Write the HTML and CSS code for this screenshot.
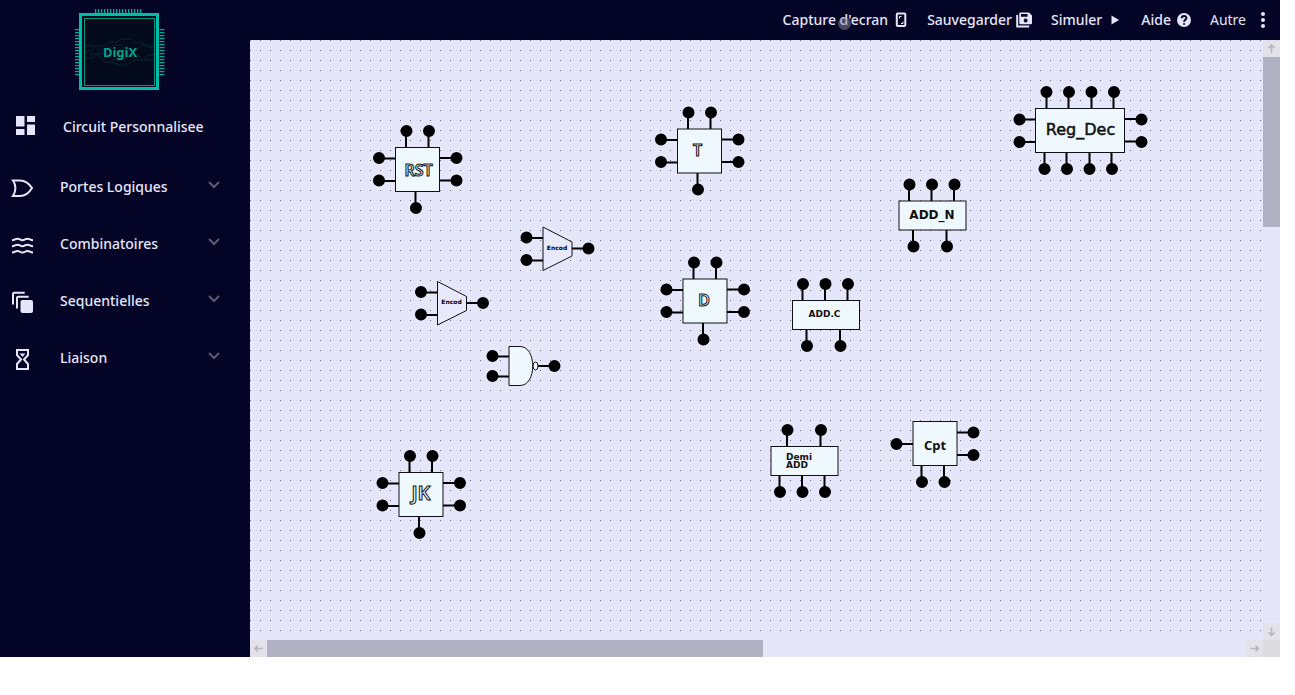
FILE: index.html
```html
<!DOCTYPE html>
<html lang="fr">
<head>
<meta charset="utf-8">
<title>DigiX</title>
<link rel="stylesheet" href="styles.css">
</head>
<body>
<div class="app">
  <aside class="sidebar">
    <svg class="logo" width="96" height="84" viewBox="0 0 96 84" role="img" aria-label="DigiX">
      <path class="logo-pins" stroke-width="4" stroke-dasharray="1.3 1.7" d="M23 3H71"/>
      <path class="logo-pins" stroke-width="5" stroke-dasharray="1.3 1.7" d="M5.500 21V68M90 21V68"/>
      <rect class="logo-frame" x="8.500" y="6.500" width="77" height="74"/>
      <rect class="logo-line" x="12.500" y="10.500" width="70" height="67"/>
      <g class="logo-waves">
        <path d="M13 43h7l4-5h8l5-4h8l4-3h9l5 4h8l4 4h7"/>
        <path d="M13 38h9l5 4h9l5-5h9l6 5h9l5-5h12"/>
        <path d="M13 50h8l5-5h9l6 7h10l6-5h9l5 5h11"/>
        <path d="M18 46h9l5 8h9l5 3h10l5-5h10l4-5h7"/>
      </g>
      <text class="logo-text" x="48" y="49">DigiX</text>
    </svg>
    <nav class="menu">
      <button class="menu-item menu-item-first" type="button">
        <svg class="menu-icon" viewBox="0 0 22 22"><path fill="currentColor" d="M4 0h8.500v10.500H4zM4 13h8.500v6H4zM15 0h8v6h-8zM15 8.500h8V19h-8z"/></svg>
        <span>Circuit Personnalisee</span>
      </button>
      <button class="menu-item" type="button">
        <svg class="menu-icon" viewBox="0 0 22 22"><path class="line" d="M1 4.500h7c5 0 9 3 12 7.500-3 5-7 8-12 8H1c3-5 3-11 0-15.500z"/></svg>
        <span>Portes Logiques</span>
        <svg class="chevron" viewBox="0 0 12 8"><path d="M1 1l5 5 5-5"/></svg>
      </button>
      <button class="menu-item" type="button">
        <svg class="menu-icon" viewBox="0 0 22 22"><path class="line" d="M0 7.200c3 0 3-1.500 5.500-1.500s2.500 1.500 5 1.500 2.500-1.500 5-1.500 2.500 1.500 5.500 1.500M0 13.200c3 0 3-1.500 5.500-1.500s2.500 1.500 5 1.500 2.500-1.500 5-1.500 2.500 1.500 5.500 1.500M0 19.500c3 0 3-1.500 5.500-1.500s2.500 1.500 5 1.500 2.500-1.500 5-1.500 2.500 1.500 5.500 1.500"/></svg>
        <span>Combinatoires</span>
        <svg class="chevron" viewBox="0 0 12 8"><path d="M1 1l5 5 5-5"/></svg>
      </button>
      <button class="menu-item" type="button">
        <svg class="menu-icon" viewBox="0 0 22 22"><path class="line" d="M1 14.500V4q0-1.200 1.200-1.200h10.500M5 18.500V8q0-1.200 1.200-1.200h10.500"/><rect x="8.500" y="10" width="12.500" height="13" rx="2" fill="currentColor"/></svg>
        <span>Sequentielles</span>
        <svg class="chevron" viewBox="0 0 12 8"><path d="M1 1l5 5 5-5"/></svg>
      </button>
      <button class="menu-item" type="button">
        <svg class="menu-icon" viewBox="0 0 22 22"><path class="line" d="M5 3h11v5l-4 4.500 4 4.500v5H5v-5l4-4.500L5 8z"/><path fill="currentColor" d="M7.500 6.500h6l-3 3.500z"/></svg>
        <span>Liaison</span>
        <svg class="chevron" viewBox="0 0 12 8"><path d="M1 1l5 5 5-5"/></svg>
      </button>
    </nav>
  </aside>

  <header class="toolbar">
    <button class="tool" type="button">
      <span>Capture d'ecran</span>
      <svg class="tool-icon" viewBox="0 0 20 20"><rect class="line" x="5.800" y="3.500" width="8.500" height="12.500" rx="1"/><path class="thin" d="M8.500 8.500v-2h2M12 11.500v2h-2"/></svg>
      <i class="pointer"></i>
    </button>
    <button class="tool" type="button">
      <span>Sauvegarder</span>
      <svg class="tool-icon" viewBox="0 0 20 20"><path class="line" d="M2.200 5v11.500h12"/><path fill="currentColor" fill-rule="evenodd" d="M5.500 2.500h8.500l3 3V13q0 1.200-1.200 1.200H5.500Q4.300 14.200 4.300 13V3.700q0-1.200 1.200-1.200zM6 4v2.800h6.500V4zM10.600 8.600a2 2 0 1 0 .1 0z"/></svg>
    </button>
    <button class="tool" type="button">
      <span>Simuler</span>
      <svg class="tool-icon" viewBox="0 0 20 20"><path fill="currentColor" d="M6.500 5.500l7.500 4.500-7.500 4.500z"/></svg>
    </button>
    <button class="tool" type="button">
      <span>Aide</span>
      <svg class="tool-icon" viewBox="0 0 20 20"><circle cx="10" cy="10" r="7" fill="currentColor"/><path class="question" d="M7.700 8.300c0-3 4.700-3 4.700-.3 0 1.800-2.300 1.800-2.300 3.800M10.100 13.300v1.500"/></svg>
    </button>
    <button class="tool tool-light" type="button">
      <span>Autre</span>
      <svg class="tool-icon" viewBox="0 0 20 20"><g fill="currentColor"><circle cx="10" cy="4" r="2"/><circle cx="10" cy="10" r="2"/><circle cx="10" cy="16" r="2"/></g></svg>
    </button>
  </header>

  <main class="workspace">
    <div class="canvas">
      <svg class="circuit">
        <defs>
          <g id="flipflop">
            <path class="wire" d="M10.500 -16V0M33 -16V0M-17 11H0M-17 33.500H0M44 10.500H60M44 33H60M20 44V60"/>
            <rect class="body" width="44" height="44"/>
            <path class="pin" d="M11 -16.500h0M33.500 -16.500h0M-16.500 10.500h0M-16.500 33h0M61 10.500h0M61 33h0M20.500 60.500h0"/>
          </g>
          <g id="mux">
            <path class="wire" d="M-16 11.500H0M-16 34H0M29 22H45"/>
            <path class="shape" d="M0 .5L29 15.500V29.500L0 44z"/>
            <path class="pin" d="M-16.500 11h0M-16.500 33.500h0M45.500 22h0"/>
          </g>
          <g id="adder">
            <path class="wire" d="M10 -16V0M32.500 -16V0M55 -16V0M14 29V45M47.500 29V45"/>
            <rect class="body" width="67" height="29"/>
            <path class="pin" d="M10.500 -16.500h0M33 -16.500h0M55.500 -16.500h0M14.500 45.500h0M48 45.500h0"/>
          </g>
        </defs>
        <g transform="translate(145.500 107.500)"><use href="#flipflop"/><text class="label outlined" x="23" y="28">RST</text></g>
        <g transform="translate(427.500 89)"><use href="#flipflop"/><text class="label outlined" x="20" y="27">T</text></g>
        <g transform="translate(433 239)"><use href="#flipflop"/><text class="label outlined" x="21" y="27">D</text></g>
        <g transform="translate(149 432.500)"><use href="#flipflop"/><text class="label outlined large" x="22" y="27">JK</text></g>
        <g transform="translate(293 186.500)"><use href="#mux"/><text class="label tiny" x="14" y="23">Encod</text></g>
        <g transform="translate(187.500 241)"><use href="#mux"/><text class="label tiny" x="14" y="23">Encod</text></g>
        <g transform="translate(649 161)"><use href="#adder"/><text class="label wide" x="33" y="18">ADD_N</text></g>
        <g transform="translate(542.500 260.500)"><use href="#adder"/><text class="label small" x="32" y="16">ADD.C</text></g>
        <g transform="translate(521 406.500)">
          <path class="wire" d="M16 -16V0M49.500 -16V0M8.500 29V45M31 29V45M53.500 29V45"/>
          <rect class="body" width="67" height="29"/>
          <path class="pin" d="M16.500 -16.500h0M50 -16.500h0M9 45.500h0M31.500 45.500h0M54 45.500h0"/>
          <text class="label small start" x="15" y="13">Demi<tspan x="15" dy="8">ADD</tspan></text>
        </g>
        <g transform="translate(663 381.500)">
          <path class="wire" d="M-16 22.500H0M44 11H60M44 33.500H60M8.500 44V60M31 44V60"/>
          <rect class="body" width="44" height="44"/>
          <path class="pin" d="M-16.500 22.500h0M60.500 11h0M60.500 33.500h0M9 60.500h0M31.500 60.500h0"/>
          <text class="label counter" x="22" y="28">Cpt</text>
        </g>
        <g transform="translate(785.500 68.500)">
          <path class="wire" d="M11 -16V0M33 -16V0M56 -16V0M78 -16V0M9 44V60M31 44V60M54 44V60M76 44V60M-16 11H0M-16 33.500H0M89 10.500H105M89 33H105"/>
          <rect class="body" width="89" height="44"/>
          <path class="pin" d="M11 -16.500h0M33.500 -16.500h0M56 -16.500h0M78.500 -16.500h0M9 60.500h0M31.500 60.500h0M54 60.500h0M76.500 60.500h0M-16 11h0M-16 33.500h0M106 11h0M106 33.500h0"/>
          <text class="label register" x="45" y="26">Reg_Dec</text>
        </g>
        <g transform="translate(259 306.500)">
          <path class="wire" d="M-17 10H0M-17 30H0M28 19.500H45"/>
          <path class="body" d="M0 0H11C28 0 28 39 11 39H0z"/>
          <ellipse class="body" cx="26.500" cy="19.500" rx="2.500" ry="4"/>
          <path class="pin" d="M-16.500 9.500h0M-16.500 29.500h0M45.500 19.500h0"/>
        </g>
      </svg>
    </div>
    <div class="scroll scroll-vertical">
      <button class="arrow" type="button" aria-label="Haut"><svg viewBox="0 0 17 17"><path d="M8.500 13V5M5.500 8l3-3 3 3"/></svg></button>
      <div class="track"><div class="thumb"></div></div>
      <button class="arrow" type="button" aria-label="Bas"><svg viewBox="0 0 17 17"><path d="M8.500 4.500v8M5.500 9.500l3 3 3-3"/></svg></button>
    </div>
    <div class="scroll scroll-horizontal">
      <button class="arrow" type="button" aria-label="Gauche"><svg viewBox="0 0 17 17"><path d="M13 8.500H5M8 5.500l-3 3 3 3"/></svg></button>
      <div class="track"><div class="thumb"></div></div>
      <button class="arrow" type="button" aria-label="Droite"><svg viewBox="0 0 17 17"><path d="M4.500 8.500h8M9.500 5.500l3 3-3 3"/></svg></button>
    </div>
    <div class="corner"></div>
  </main>
</div>
</body>
</html>
```
FILE: styles.css
```css
* {
  box-sizing: border-box;
}

body {
  margin: 0;
  padding-right: 15px;
  background: #fff;
  font-family: "Noto Sans", "Open Sans", sans-serif;
  font-size: 15px;
  line-height: 20px;
}

button {
  margin: 0;
  padding: 0;
  border: 0;
  background: none;
  color: inherit;
  font: inherit;
}

.app {
  display: grid;
  grid-template-columns: 250px 1fr;
  grid-template-rows: 40px 1fr;
  height: calc(100vh - 38px);
  background: #040426;
  color: #e6e6fa;
}

.line,
.thin,
.question,
.chevron path {
  fill: none;
  stroke: currentColor;
  stroke-width: 2;
}

.thin {
  stroke-width: 1;
}

.question {
  stroke: #040426;
}

/* Sidebar */

.sidebar {
  grid-row: 1 / 3;
  display: flex;
  flex-direction: column;
  padding-top: 8px;
}

.logo {
  margin-left: 72px;
}

.logo-pins {
  fill: none;
  stroke: #00a895;
}

.logo-frame {
  fill: #020a1b;
  stroke: #00bba5;
  stroke-width: 3;
}

.logo-line {
  fill: none;
  stroke: #009583;
}

.logo-waves {
  fill: none;
  stroke: #04242e;
}

.logo-text {
  fill: #009e8c;
  font-size: 13px;
  font-weight: 700;
  text-anchor: middle;
}

.menu {
  display: flex;
  flex-direction: column;
  padding-top: 4px;
}

.menu-item {
  display: flex;
  align-items: center;
  gap: 26px;
  height: 57px;
  padding: 0 30px 0 12px;
  font-size: 14px;
  font-weight: 500;
  text-align: left;
}

.menu-item-first {
  gap: 29px;
  height: 62px;
}

.menu-icon {
  width: 22px;
  height: 22px;
  overflow: visible;
}

.chevron {
  width: 12px;
  height: 8px;
  margin-left: auto;
  margin-bottom: 4px;
  color: #5b5b70;
}

/* Toolbar */

.toolbar {
  display: flex;
  align-items: center;
  justify-content: flex-end;
  gap: 16px;
  padding-right: 7px;
}

.tool {
  position: relative;
  display: flex;
  align-items: center;
  gap: 3px;
  font-size: 14px;
  font-weight: 500;
  line-height: 22px;
}

.tool-light {
  gap: 7px;
  font-weight: 400;
}

.tool-icon {
  width: 20px;
  height: 20px;
}

.pointer {
  position: absolute;
  top: 8px;
  left: 55px;
  width: 13px;
  height: 13px;
  border-radius: 50%;
  background: rgba(140, 140, 155, 0.5);
}

/* Workspace */

.workspace {
  display: grid;
  grid-template-columns: 1fr 17px;
  grid-template-rows: 1fr 17px;
  min-width: 0;
  min-height: 0;
  background: #e6e6fa;
}

.canvas {
  min-width: 0;
  min-height: 0;
  overflow: hidden;
  background: conic-gradient(from 270deg at 1px 1px, #6e6e82 90deg, transparent 0) 0 0 / 10px 10px;
}

.circuit {
  display: block;
  width: 100%;
  height: 100%;
}

.wire {
  fill: none;
  stroke: #000;
  stroke-width: 2;
}

.body,
.shape {
  fill: #f0f8ff;
  stroke: #111;
  stroke-width: 1;
}

.shape {
  fill: #e8e9fc;
}

.pin {
  stroke: #000;
  stroke-width: 12;
  stroke-linecap: round;
}

.label {
  fill: #111;
  font-weight: 700;
  text-anchor: middle;
}

.outlined {
  fill: #f0f8ff;
  stroke: #111;
  stroke-width: 1;
  font-size: 16px;
  font-weight: 600;
}

.large {
  font-size: 20px;
}

.tiny,
.small,
.wide,
.register {
  font-family: "DejaVu Sans", sans-serif;
}

.tiny {
  fill: #000;
  font-size: 6px;
}

.small {
  font-size: 9px;
}

.wide {
  font-size: 12px;
}

.register {
  font-size: 16px;
  font-weight: 400;
  stroke: #111;
  stroke-width: 0.5px;
}

.counter {
  font-size: 13px;
}

.start {
  text-anchor: start;
}

/* Scrollbars */

.scroll {
  display: flex;
}

.scroll-vertical {
  flex-direction: column;
}

.track {
  flex: 1;
}

.thumb {
  background: #b2b1c3;
}

.scroll-vertical .thumb {
  height: 30%;
}

.scroll-horizontal .thumb {
  width: 50.7%;
  height: 100%;
}

.arrow {
  display: block;
  width: 17px;
  height: 17px;
  background: #e3e2eb;
}

.arrow svg {
  display: block;
}

.arrow path {
  fill: none;
  stroke: #b5b5c1;
  stroke-width: 1.5px;
}

.corner {
  background: #dcdcde;
}
```
